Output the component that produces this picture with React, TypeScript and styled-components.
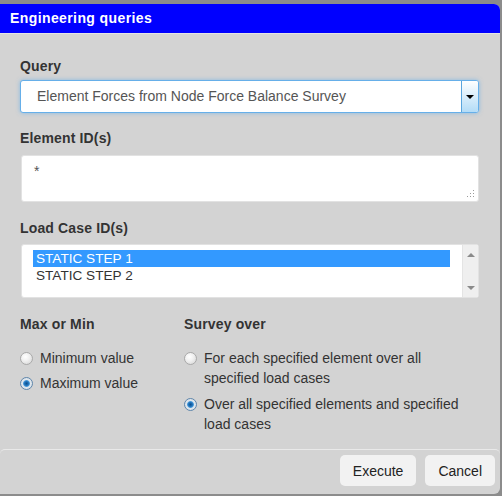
import React from "react";
import styled, { createGlobalStyle } from "styled-components";

const Global = createGlobalStyle`
  html, body { margin: 0; padding: 0; background: #8c8c8c; }
  body { font-family: "Liberation Sans", Arial, sans-serif; overflow: hidden; }
  * { box-sizing: border-box; }
`;

const Dialog = styled.div`
  margin-top: 4px;
  width: 500px;
  height: 490px;
  background: #d3d3d3;
  border-radius: 0 6px 6px 0;
  overflow: hidden;
  display: flex;
  flex-direction: column;
`;

const TitleBar = styled.div`
  height: 30px;
  line-height: 29px;
  background: #0000ff;
  color: #fff;
  font-weight: bold;
  font-size: 14px;
  letter-spacing: 0.4px;
  padding-left: 10px;
  border-bottom: 1px solid #e4e4e4;
`;

const Body = styled.div`
  padding: 22px 21px 0 20px;
  display: flex;
  flex-direction: column;
`;

const Label = styled.div<{ $mt?: number; $mb?: number }>`
  font-weight: bold;
  font-size: 14px;
  line-height: 20px;
  letter-spacing: 0.15px;
  color: #333;
  margin-top: ${(p) => p.$mt ?? 0}px;
  margin-bottom: ${(p) => p.$mb ?? 0}px;
`;

const Select = styled.div`
  height: 33px;
  background: #fff;
  border: 1px solid #66afe9;
  border-radius: 3px;
  box-shadow: 0 0 4px rgba(102, 175, 233, 0.7);
  display: flex;
  align-items: stretch;
`;

const SelectText = styled.div`
  flex: 1;
  padding-left: 16px;
  font-size: 14px;
  line-height: 31px;
  color: #555;
`;

const DropButton = styled.div`
  width: 17px;
  border-left: 1px solid #5aa5dd;
  background: linear-gradient(#ffffff, #b3dcf7);
  border-radius: 0 2px 2px 0;
  display: flex;
  align-items: center;
  justify-content: center;
`;

const DownTri = styled.span<{ $color?: string; $size?: number }>`
  width: 0;
  height: 0;
  border-left: ${(p) => p.$size ?? 4}px solid transparent;
  border-right: ${(p) => p.$size ?? 4}px solid transparent;
  border-top: ${(p) => p.$size ?? 4}px solid ${(p) => p.$color ?? "#000"};
`;

const UpTri = styled.span<{ $color?: string; $size?: number }>`
  width: 0;
  height: 0;
  border-left: ${(p) => p.$size ?? 4}px solid transparent;
  border-right: ${(p) => p.$size ?? 4}px solid transparent;
  border-bottom: ${(p) => p.$size ?? 4}px solid ${(p) => p.$color ?? "#000"};
`;

const TextArea = styled.div`
  position: relative;
  height: 47px;
  margin-left: 1px;
  background: #fff;
  border: 1px solid #e2e2e2;
  border-radius: 3px;
  padding: 5px 12px;
  font-size: 14px;
  line-height: 20px;
  color: #555;
`;

const Grip = styled.svg`
  position: absolute;
  right: 3px;
  bottom: 3px;
`;

const ListBox = styled.div`
  height: 54px;
  margin-left: 1px;
  background: #fff;
  border: 1px solid #e2e2e2;
  border-radius: 3px;
  display: flex;
`;

const Options = styled.div`
  flex: 1;
  padding: 5px 12px 0 11px;
`;

const Option = styled.div<{ $selected?: boolean }>`
  height: 17px;
  line-height: 17px;
  font-size: 13.6px;
  padding-left: 3px;
  color: ${(p) => (p.$selected ? "#fff" : "#333")};
  background: ${(p) => (p.$selected ? "#3399ff" : "transparent")};
`;

const ScrollBar = styled.div`
  width: 16px;
  background: #efefef;
  border-left: 1px solid #e4e4e4;
  display: flex;
  flex-direction: column;
  justify-content: space-between;
  align-items: center;
  padding: 8px 0 7px;
`;

const Columns = styled.div`
  display: grid;
  grid-template-columns: 164px 1fr;
  margin-top: 16px;
`;

const Column = styled.div`
  display: flex;
  flex-direction: column;
`;

const RadioList = styled.div<{ $gap: number }>`
  display: flex;
  flex-direction: column;
  gap: ${(p) => p.$gap}px;
  margin-top: 14px;
`;

const RadioRow = styled.div`
  display: flex;
  align-items: flex-start;
  font-size: 14px;
  line-height: 20px;
  color: #333;
`;

const RadioDot = styled.span<{ $checked?: boolean }>`
  flex: none;
  width: 13px;
  height: 13px;
  margin-top: 4px;
  margin-right: 7px;
  border-radius: 50%;
  border: 1px solid ${(p) => (p.$checked ? "#5f86ab" : "#a9a9a9")};
  background: ${(p) =>
    p.$checked
      ? "radial-gradient(circle at 50% 50%, #0f4f8c 0, #1f73bb 2px, #4c9ad8 3px, #dfe7ee 3.8px, #d6dce2 100%)"
      : "radial-gradient(circle at 40% 35%, #ffffff 0, #f1f1f1 40%, #d2d2d2 100%)"};
`;

const Footer = styled.div`
  margin-top: auto;
  height: 45px;
  border-top: 1px solid #e9e9e9;
  border-radius: 5px 5px 0 0;
  display: flex;
  justify-content: flex-end;
  align-items: flex-start;
  gap: 9px;
  padding: 5px 5px 0 0;
`;

const Button = styled.button`
  height: 31px;
  padding: 0 13px;
  background: #f2f2f2;
  border: none;
  border-radius: 5px;
  font-family: "Liberation Sans", Arial, sans-serif;
  font-size: 14px;
  color: #222;
`;

export default function App() {
  return (
    <>
      <Global />
      <Dialog>
        <TitleBar>Engineering queries</TitleBar>
        <Body>
          <Label $mb={4}>Query</Label>
          <Select>
            <SelectText>Element Forces from Node Force Balance Survey</SelectText>
            <DropButton>
              <DownTri $size={4} />
            </DropButton>
          </Select>

          <Label $mt={15} $mb={7}>Element ID(s)</Label>
          <TextArea>
            *
            <Grip width="9" height="9" viewBox="0 0 9 9">
              <g fill="#9a9a9a">
                <rect x="7" y="1" width="1" height="1" />
                <rect x="4" y="4" width="1" height="1" />
                <rect x="7" y="4" width="1" height="1" />
                <rect x="1" y="7" width="1" height="1" />
                <rect x="4" y="7" width="1" height="1" />
                <rect x="7" y="7" width="1" height="1" />
              </g>
            </Grip>
          </TextArea>

          <Label $mt={16} $mb={6}>Load Case ID(s)</Label>
          <ListBox>
            <Options>
              <Option $selected>STATIC STEP 1</Option>
              <Option>STATIC STEP 2</Option>
            </Options>
            <ScrollBar>
              <UpTri $color="#8a8a8a" $size={4} />
              <DownTri $color="#8a8a8a" $size={4} />
            </ScrollBar>
          </ListBox>

          <Columns>
            <Column>
              <Label>Max or Min</Label>
              <RadioList $gap={5}>
                <RadioRow>
                  <RadioDot />
                  Minimum value
                </RadioRow>
                <RadioRow>
                  <RadioDot $checked />
                  Maximum value
                </RadioRow>
              </RadioList>
            </Column>
            <Column>
              <Label>Survey over</Label>
              <RadioList $gap={6}>
                <RadioRow>
                  <RadioDot />
                  <span>For each specified element over all specified load cases</span>
                </RadioRow>
                <RadioRow>
                  <RadioDot $checked />
                  <span>Over all specified elements and specified load cases</span>
                </RadioRow>
              </RadioList>
            </Column>
          </Columns>
        </Body>
        <Footer>
          <Button>Execute</Button>
          <Button>Cancel</Button>
        </Footer>
      </Dialog>
    </>
  );
}
